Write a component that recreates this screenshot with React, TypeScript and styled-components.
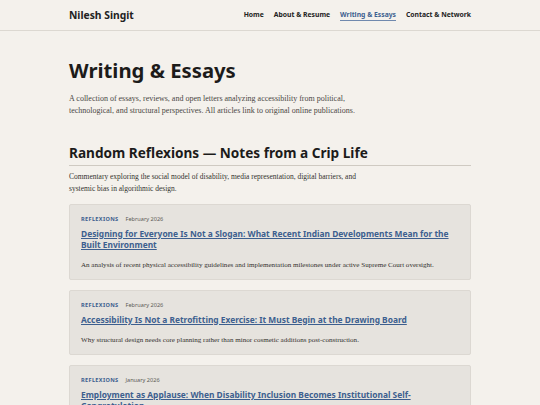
import React from "react";
import styled, { createGlobalStyle } from "styled-components";

const Global = createGlobalStyle`
  html, body { margin: 0; padding: 0; overflow: hidden; }
  body {
    background: #f4f1ec;
    color: #1f1e1c;
    font-family: "Liberation Serif", "DejaVu Serif", serif;
  }
`;

const Header = styled.header`
  border-bottom: 1px solid #dcd8d1;
`;

const HeaderInner = styled.div`
  max-width: 402px;
  margin: 0 auto;
  height: 30px;
  display: flex;
  align-items: center;
  justify-content: space-between;
`;

const Brand = styled.div`
  font-family: "Noto Sans", sans-serif;
  font-weight: 700;
  font-size: 10.3px;
  color: #222;
`;

const Nav = styled.nav`
  display: flex;
  gap: 10px;
`;

const NavLink = styled.a<{ $active?: boolean }>`
  font-family: "Noto Sans", sans-serif;
  font-weight: 700;
  font-size: 6.8px;
  color: ${(p) => (p.$active ? "#3d5f8f" : "#222")};
  text-decoration: none;
  padding-bottom: 1px;
  border-bottom: 1px solid ${(p) => (p.$active ? "#7089ae" : "transparent")};
`;

const Main = styled.main`
  max-width: 402px;
  margin: 0 auto;
  padding-top: 27px;
`;

const Title = styled.h1`
  font-family: "Noto Sans", sans-serif;
  font-weight: 700;
  font-size: 20.3px;
  line-height: 24px;
  margin: 0 0 11px;
  color: #1c1b1a;
`;

const Intro = styled.p`
  font-size: 8px;
  line-height: 12px;
  color: #4a4744;
  max-width: 300px;
  margin: 0 0 27px;
`;

const SectionTitle = styled.h2`
  font-family: "Noto Sans", sans-serif;
  font-weight: 700;
  font-size: 13.6px;
  line-height: 18px;
  margin: 0;
  padding-bottom: 3px;
  border-bottom: 1px solid #cfcac2;
  color: #1c1b1a;
`;

const SectionDesc = styled.p`
  font-size: 7.5px;
  line-height: 12px;
  color: #33312e;
  max-width: 300px;
  margin: 5px 0 9px;
`;

const CardList = styled.div`
  display: flex;
  flex-direction: column;
  gap: 10px;
`;

const Card = styled.article`
  background: #e6e3de;
  border: 1px solid #dcd8d2;
  border-radius: 2px;
  padding: 10px 11px 9px;
`;

const Meta = styled.div`
  display: flex;
  align-items: baseline;
  gap: 7px;
  font-family: "Noto Sans", sans-serif;
  line-height: 8px;
`;

const Category = styled.span`
  font-size: 5.6px;
  font-weight: 700;
  letter-spacing: 0.06em;
  color: #3d5f8f;
  text-transform: uppercase;
`;

const DateText = styled.span`
  font-size: 5.6px;
  color: #5d5a56;
`;

const CardTitle = styled.a`
  display: block;
  margin-top: 4.5px;
  font-family: "Noto Sans", sans-serif;
  font-weight: 700;
  font-size: 8.4px;
  line-height: 11px;
  color: #3d5f8f;
  text-decoration: underline;
  text-underline-offset: 1px;
`;

const CardDesc = styled.p`
  font-size: 7.05px;
  line-height: 10px;
  color: #33312e;
  margin: 10.5px 0 0;
`;

const articles = [
  {
    date: "February 2026",
    title:
      "Designing for Everyone Is Not a Slogan: What Recent Indian Developments Mean for the Built Environment",
    desc: "An analysis of recent physical accessibility guidelines and implementation milestones under active Supreme Court oversight.",
  },
  {
    date: "February 2026",
    title:
      "Accessibility Is Not a Retrofitting Exercise: It Must Begin at the Drawing Board",
    desc: "Why structural design needs core planning rather than minor cosmetic additions post-construction.",
  },
  {
    date: "January 2026",
    title:
      "Employment as Applause: When Disability Inclusion Becomes Institutional Self-Congratulation",
    desc: "A critique of performative hiring drives and the gap between announcements and meaningful inclusion.",
  },
];

export default function App() {
  return (
    <>
      <Global />
      <Header>
        <HeaderInner>
          <Brand>Nilesh Singit</Brand>
          <Nav>
            <NavLink href="#">Home</NavLink>
            <NavLink href="#">About &amp; Resume</NavLink>
            <NavLink href="#" $active>
              Writing &amp; Essays
            </NavLink>
            <NavLink href="#">Contact &amp; Network</NavLink>
          </Nav>
        </HeaderInner>
      </Header>
      <Main>
        <Title>Writing &amp; Essays</Title>
        <Intro>
          A collection of essays, reviews, and open letters analyzing accessibility from political,
          technological, and structural perspectives. All articles link to original online
          publications.
        </Intro>
        <SectionTitle>Random Reflexions — Notes from a Crip Life</SectionTitle>
        <SectionDesc>
          Commentary exploring the social model of disability, media representation, digital
          barriers, and systemic bias in algorithmic design.
        </SectionDesc>
        <CardList>
          {articles.map((a) => (
            <Card key={a.title}>
              <Meta>
                <Category>Reflexions</Category>
                <DateText>{a.date}</DateText>
              </Meta>
              <CardTitle href="#">{a.title}</CardTitle>
              <CardDesc>{a.desc}</CardDesc>
            </Card>
          ))}
        </CardList>
      </Main>
    </>
  );
}
